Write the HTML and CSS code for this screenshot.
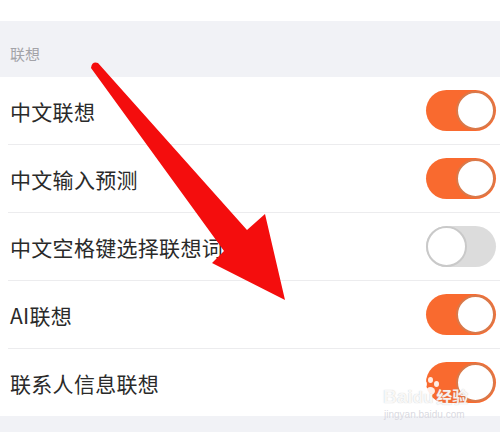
FILE: index.html
```html
<!DOCTYPE html>
<html lang="zh">
<head>
<meta charset="utf-8">
<link rel="stylesheet" href="styles.css">
</head>
<body>
<div class="screen">
  <div class="prev-card"></div>
  <div class="section-header">联想</div>
  <div class="card">
    <div class="row"><span class="label">中文联想</span><span class="switch on"><span class="thumb"></span></span></div>
    <div class="row"><span class="label">中文输入预测</span><span class="switch on"><span class="thumb"></span></span></div>
    <div class="row"><span class="label">中文空格键选择联想词</span><span class="switch off"><span class="thumb"></span></span></div>
    <div class="row"><span class="label">AI联想</span><span class="switch on"><span class="thumb"></span></span></div>
    <div class="row last"><span class="label">联系人信息联想</span><span class="switch on"><span class="thumb"></span></span></div>
  </div>
  <div class="bottom"></div>

  <svg class="arrow" width="500" height="432" viewBox="0 0 500 432">
    <path d="M91 68 Q92 61 98 63 L247 230 L265 214 L285 300 L212 263 L224 251 Z" fill="#f40d0d"/>
  </svg>

  <div class="watermark">
    <span class="wm-paw">
      <span class="dot d1"></span><span class="dot d2"></span><span class="dot d3"></span><span class="dot d4"></span>
    </span>
    <span class="wm-main">Bai<span class="wm-du">du</span><span class="wm-cn">经验</span></span>
    <span class="wm-url">jingyan.baidu.com</span>
  </div>
</div>
</body>
</html>
```

FILE: styles.css
```css
html, body {
  margin: 0;
  padding: 0;
  background: #f1f2f6;
}
.screen {
  position: relative;
  width: 500px;
  height: 432px;
  overflow: hidden;
  font-family: "Noto Sans CJK SC", "Noto Sans", sans-serif;
  background: #f1f2f6;
}
.prev-card {
  height: 21px;
  background: #ffffff;
}
.section-header {
  height: 56px;
  box-sizing: border-box;
  padding: 22px 0 0 10px;
  font-size: 15px;
  line-height: 22px;
  color: #a3a3a8;
}
.card {
  background: #ffffff;
}
.row {
  height: 67px;
  margin-left: 8px;
  padding: 0 4px 0 2px;
  border-bottom: 1px solid #ececee;
  display: flex;
  align-items: center;
  justify-content: space-between;
}
.row.last {
  border-bottom: none;
}
.label {
  font-size: 21px;
  color: #2a2a2a;
  letter-spacing: 0.3px;
  white-space: nowrap;
}
.switch {
  width: 70px;
  height: 41px;
  border-radius: 21px;
  box-sizing: border-box;
  display: flex;
  align-items: center;
  flex-shrink: 0;
}
.switch.on {
  background: #f96a2f;
  justify-content: flex-end;
  padding-right: 1px;
}
.switch.off {
  background: #dcdcdc;
  justify-content: flex-start;
}
.thumb {
  width: 39px;
  height: 39px;
  border-radius: 50%;
  background: #ffffff;
  box-sizing: border-box;
}
.switch.on .thumb {
  border: 2px solid #d9794a;
}
.switch.off .thumb {
  width: 41px;
  height: 41px;
  border: 2px solid #c9c9c9;
}
.bottom {
  height: 16px;
}
.arrow {
  position: absolute;
  left: 0;
  top: 0;
}
.watermark {
  position: absolute;
  left: 382px;
  top: 376px;
  width: 110px;
  height: 50px;
  color: rgba(255,255,255,0.88);
  font-family: "Liberation Sans", sans-serif;
}
.wm-paw {
  position: absolute;
  left: 40px;
  top: 1px;
}
.dot {
  position: absolute;
  border-radius: 50%;
  background: rgba(255,255,255,0.88);
}
.d1 { left: 0; top: 4px; width: 5px; height: 6px; }
.d2 { left: 6px; top: 0; width: 5px; height: 6px; }
.d3 { left: 12px; top: 4px; width: 5px; height: 6px; }
.d4 { left: 4px; top: 10px; width: 9px; height: 8px; }
.wm-main {
  position: absolute;
  left: 1px;
  top: 9px;
  font-size: 19px;
  font-weight: bold;
  line-height: 22px;
  white-space: nowrap;
  text-shadow: 0 0 1px rgba(170,170,170,0.7);
}
.wm-du {
  font-size: 17px;
}
.wm-cn {
  font-family: "Noto Sans CJK SC", sans-serif;
  font-size: 16px;
  margin-left: 3px;
}
.wm-url {
  position: absolute;
  left: 2px;
  top: 33px;
  font-size: 10px;
  white-space: nowrap;
  color: rgba(215,215,222,0.95);
}
```
